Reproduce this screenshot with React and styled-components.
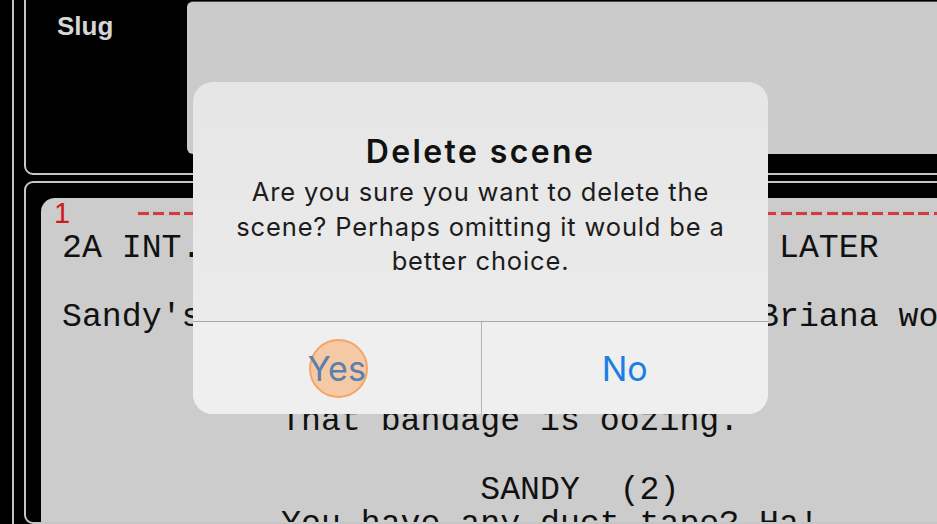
import React from 'react';
import styled, { createGlobalStyle } from 'styled-components';

const GlobalStyle = createGlobalStyle`
  html, body {
    margin: 0;
    padding: 0;
    background: #000000;
  }
`;

const SCRIPT_LINES = [
  '2A INT. SANDY\'S APARTMENT - MOMENTS LATER',
  '',
  'Sandy\'s cramped bathroom. A sweaty Briana works a needle',
  '',
  '                     SANDY',
  '           That bandage is oozing.',
  '',
  '                     SANDY  (2)',
  '           You have any duct tape? Ha!',
];

function App() {
  return (
    <>
      <GlobalStyle />
      <Screen>
        <Frame>
          <SlugPanel>
            <SlugLabel>Slug</SlugLabel>
            <SlugInput />
          </SlugPanel>
          <ScriptPanel>
            <Page>
              <MarkerRow>
                <SceneNumber>1</SceneNumber>
                <Dashes />
              </MarkerRow>
              <ScriptText>
                {SCRIPT_LINES.map((line, idx) => (
                  <ScriptLine key={idx}>{line || ' '}</ScriptLine>
                ))}
              </ScriptText>
            </Page>
          </ScriptPanel>
        </Frame>

        <Alert>
          <AlertBody>
            <AlertTitle>Delete scene</AlertTitle>
            <AlertMessage>
              Are you sure you want to delete the scene? Perhaps omitting it would be a better choice.
            </AlertMessage>
          </AlertBody>
          <AlertActions>
            <AlertButton $pressed>
              <TouchRing />
              <span>Yes</span>
            </AlertButton>
            <AlertButton>
              <span>No</span>
            </AlertButton>
          </AlertActions>
        </Alert>
      </Screen>
    </>
  );
}

export default App;

const Screen = styled.div`
  position: relative;
  width: 937px;
  height: 524px;
  overflow: hidden;
  background: #000000;
  padding-left: 12px;
  box-sizing: border-box;
`;

const Frame = styled.div`
  height: 100%;
  border-left: 2px solid #c2c2c2;
  padding-left: 10px;
  box-sizing: border-box;
  display: flex;
  flex-direction: column;
  gap: 6px;
`;

const SlugPanel = styled.div`
  margin-top: -12px;
  width: calc(100% + 20px);
  border: 2px solid #c6c6c6;
  border-radius: 9px;
  padding: 11px 0 19px 31px;
  display: flex;
  flex-shrink: 0;
  box-sizing: border-box;
`;

const SlugLabel = styled.div`
  width: 130px;
  flex-shrink: 0;
  font-family: 'Liberation Sans', Arial, sans-serif;
  font-weight: 700;
  font-size: 26px;
  line-height: 50px;
  color: #d6d6d6;
`;

const SlugInput = styled.div`
  flex: 1;
  height: 153px;
  background: #cbcbcb;
  border-top: 1px solid #4c4c4c;
  border-radius: 6px;
  box-sizing: border-box;
`;

const ScriptPanel = styled.div`
  flex: 1;
  width: calc(100% + 20px);
  border: 2px solid #c6c6c6;
  border-radius: 9px;
  padding: 15px 0 0 15px;
  box-sizing: border-box;
  overflow: hidden;
  display: flex;
`;

const Page = styled.div`
  flex: 1;
  background: #cccccc;
  border-top-left-radius: 14px;
  padding-left: 21px;
  overflow: hidden;
`;

const MarkerRow = styled.div`
  height: 30px;
  display: flex;
  align-items: center;
`;

const SceneNumber = styled.span`
  margin-left: -8px;
  width: 84px;
  font-family: 'Liberation Sans', Arial, sans-serif;
  font-size: 29px;
  line-height: 34px;
  color: #cc1c1c;
`;

const Dashes = styled.div`
  flex: 1;
  height: 3px;
  background: repeating-linear-gradient(
    to right,
    #d43c3c 0 11px,
    transparent 11px 15.3px
  );
  box-shadow: 0 0 1px rgba(214, 60, 60, 0.5);
`;

const ScriptText = styled.div`
  margin-top: 3px;
`;

const ScriptLine = styled.div`
  font-family: 'Liberation Mono', 'Courier New', monospace;
  font-size: 33.2px;
  line-height: 34.5px;
  height: 34.5px;
  white-space: pre;
  color: #111111;
`;

const Alert = styled.div`
  position: absolute;
  left: 193px;
  top: 82px;
  width: 575px;
  height: 332px;
  border-radius: 20px;
  overflow: hidden;
  background: linear-gradient(180deg, #e6e6e6 0%, #eaeaea 60%, #efefef 100%);
  display: flex;
  flex-direction: column;
`;

const AlertBody = styled.div`
  height: 239px;
  padding: 52px 36px 0;
  box-sizing: border-box;
  text-align: center;
  font-family: Inter, 'Noto Sans', sans-serif;
`;

const AlertTitle = styled.div`
  font-size: 32px;
  font-weight: 600;
  letter-spacing: 2.4px;
  line-height: 36px;
  color: #111111;
`;

const AlertMessage = styled.div`
  margin-top: 5px;
  font-size: 25.5px;
  letter-spacing: 0.85px;
  line-height: 34.5px;
  color: #1c1c1c;
`;

const AlertActions = styled.div`
  flex: 1;
  display: grid;
  grid-template-columns: 1fr 1fr;
  border-top: 1px solid #a9a9a9;
  background: #efefef;
`;

const AlertButton = styled.div`
  position: relative;
  display: flex;
  align-items: center;
  justify-content: center;
  font-family: Inter, 'Noto Sans', sans-serif;
  font-size: 34px;
  color: ${({ $pressed }) => ($pressed ? '#5a80ad' : '#1c7fe4')};
  border-left: ${({ $pressed }) => ($pressed ? 'none' : '1px solid #b4b4b4')};

  span {
    position: relative;
  }
`;

const TouchRing = styled.div`
  position: absolute;
  left: 116px;
  top: 17px;
  width: 59px;
  height: 59px;
  border-radius: 50%;
  background: #f5c9a6;
  border: 2px solid #f3a566;
  box-sizing: border-box;
`;
